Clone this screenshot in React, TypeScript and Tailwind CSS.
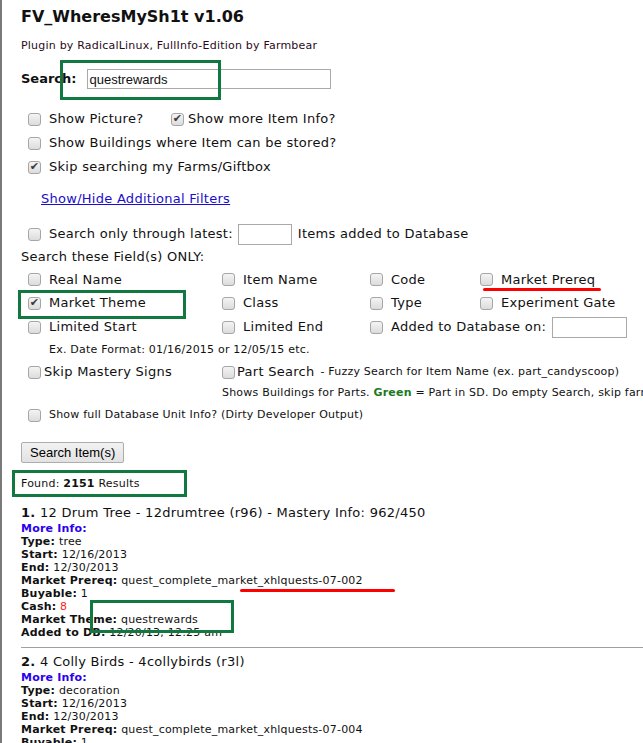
import React from "react"

function Box({ checked = false }: { checked?: boolean }) {
    return (
        <span className="relative inline-flex w-[13px] h-[13px] shrink-0 items-center justify-center rounded-[3px] border border-[#a6a6a6] bg-gradient-to-b from-[#f4f4f4] to-[#dcdcdc]">
            {checked && <span className="text-[11px] leading-none text-[#3c3c3c] -mt-[1px]">✔</span>}
        </span>
    )
}

function Field({ label, checked = false }: { label: string; checked?: boolean }) {
    return (
        <div className="flex items-center gap-[8px]">
            <Box checked={checked} />
            <span>{label}</span>
        </div>
    )
}

function Line({ k, v, vClass = "" }: { k: string; v: string; vClass?: string }) {
    return (
        <div>
            <b>{k}:</b> <span className={vClass}>{v}</span>
        </div>
    )
}

export default function App() {
    const font = { fontFamily: '"DejaVu Sans", Verdana, sans-serif' }
    const arial = { fontFamily: '"Liberation Sans", Arial, sans-serif' }

    return (
        <div className="relative min-h-screen overflow-hidden border-l-2 border-[#7a7a7a] bg-white pl-[19px] text-[#111] tracking-[0.27px]" style={font}>
            {/* header */}
            <div className="h-[34px] flex items-center text-[16px] font-bold tracking-normal">FV_WheresMySh1t v1.06</div>
            <div className="h-[24px] flex items-center text-[11px] tracking-[0.21px] text-[#2a0a1a]">Plugin by RadicalLinux, FullInfo-Edition by Farmbear</div>

            {/* search */}
            <div className="h-[42px] flex items-center text-[13px]">
                <b className="mr-[10px] tracking-normal">Search:</b>
                <div className="w-[244px] h-[20px] border border-[#a9a9a9] flex items-center px-[2px] text-[13px] leading-none tracking-normal" style={arial}>questrewards</div>
            </div>

            {/* options */}
            <div className="mt-[7px] pl-[7px] text-[13px]">
                <div className="h-[24px] flex items-center">
                    <div className="w-[143px]"><Field label="Show Picture?" /></div>
                    <div className="flex items-center gap-[4px]"><Box checked /><span>Show more Item Info?</span></div>
                </div>
                <div className="h-[24px] flex items-center"><Field label="Show Buildings where Item can be stored?" /></div>
                <div className="h-[24px] flex items-center"><Field label="Skip searching my Farms/Giftbox" checked /></div>
            </div>

            <div className="h-[40px] flex items-center pl-[20px] text-[13px]">
                <a href="#" className="text-[#1a0dcc] underline">Show/Hide Additional Filters</a>
            </div>

            <div className="mt-[3px] h-[24px] pl-[7px] flex items-center text-[13px]">
                <Field label="Search only through latest:" />
                <div className="ml-[5px] mr-[6px] w-[54px] h-[21px] border border-[#a9a9a9]" />
                <span>Items added to Database</span>
            </div>

            <div className="h-[22px] flex items-center text-[13px]">Search these Field(s) ONLY:</div>

            {/* fields grid */}
            <div className="pl-[7px] text-[13px] grid grid-cols-[194px_148px_110px_auto]">
                <div className="h-[23px] flex items-center"><Field label="Real Name" /></div>
                <div className="h-[23px] flex items-center"><Field label="Item Name" /></div>
                <div className="h-[23px] flex items-center"><Field label="Code" /></div>
                <div className="h-[23px] flex items-center"><Field label="Market Prereq" /></div>

                <div className="h-[24px] flex items-center"><Field label="Market Theme" checked /></div>
                <div className="h-[24px] flex items-center"><Field label="Class" /></div>
                <div className="h-[24px] flex items-center"><Field label="Type" /></div>
                <div className="h-[24px] flex items-center"><Field label="Experiment Gate" /></div>

                <div className="h-[24px] flex items-center"><Field label="Limited Start" /></div>
                <div className="h-[24px] flex items-center"><Field label="Limited End" /></div>
                <div className="h-[24px] flex items-center col-span-2 whitespace-nowrap">
                    <Field label="Added to Database on:" />
                    <div className="ml-[6px] w-[75px] h-[21px] border border-[#a9a9a9]" />
                </div>
            </div>

            <div className="h-[22px] flex items-center pl-[28px] text-[11px] tracking-[0.21px]">Ex. Date Format: 01/16/2015 or 12/05/15 etc.</div>

            <div className="h-[22px] pl-[7px] flex items-center text-[13px] whitespace-nowrap">
                <div className="w-[194px] flex items-center gap-[3px]"><Box /><span>Skip Mastery Signs</span></div>
                <div className="flex items-center gap-[2px]">
                    <Box />
                    <span>Part Search</span>
                    <span className="text-[11px] tracking-[0.21px] ml-[4px]">- Fuzzy Search for Item Name (ex. part_candyscoop)</span>
                </div>
            </div>
            <div className="h-[20px] pl-[201px] flex items-center text-[11px] tracking-[0.21px] whitespace-nowrap">
                Shows Buildings for Parts.&nbsp;<b className="text-[#1c7a1c]">Green</b>&nbsp;= Part in SD. Do empty Search, skip farms and Giftbox
            </div>
            <div className="h-[24px] pl-[7px] flex items-center gap-[8px] text-[11px] tracking-[0.21px]">
                <Box />
                <span>Show full Database Unit Info? (Dirty Developer Output)</span>
            </div>

            <button className="mt-[15px] h-[21px] px-[8px] rounded-[2px] border border-[#adadad] bg-gradient-to-b from-[#f2f2f2] to-[#e2e2e2] text-[13px] leading-none tracking-normal text-black" style={arial}>
                Search Item(s)
            </button>

            <div className="mt-[8px] h-[24px] flex items-center text-[11px] tracking-[0.21px]">Found:&nbsp;<b>2151</b>&nbsp;Results</div>

            {/* result 1 */}
            <div className="mt-[7px] h-[19px] flex items-center text-[13px] whitespace-nowrap"><b>1.</b>&nbsp;12 Drum Tree - 12drumtree (r96) - Mastery Info: 962/450</div>
            <div className="text-[11px] leading-[13px] tracking-[0.21px]">
                <div className="font-bold text-[#2a00ee]">More Info:</div>
                <Line k="Type" v="tree" />
                <Line k="Start" v="12/16/2013" />
                <Line k="End" v="12/30/2013" />
                <Line k="Market Prereq" v="quest_complete_market_xhlquests-07-002" />
                <Line k="Buyable" v="1" />
                <Line k="Cash" v="8" vClass="text-[#ff2020]" />
                <Line k="Market Theme" v="questrewards" />
                <Line k="Added to DB" v="12/20/13, 12:25 am" />
            </div>

            <hr className="mt-[8px] border-0 border-t border-[#a0a0a0] w-[700px]" />

            {/* result 2 */}
            <div className="mt-[5px] h-[18px] flex items-center text-[13px] whitespace-nowrap"><b>2.</b>&nbsp;4 Colly Birds - 4collybirds (r3l)</div>
            <div className="text-[11px] leading-[13px] tracking-[0.21px]">
                <div className="font-bold text-[#2a00ee]">More Info:</div>
                <Line k="Type" v="decoration" />
                <Line k="Start" v="12/16/2013" />
                <Line k="End" v="12/30/2013" />
                <Line k="Market Prereq" v="quest_complete_market_xhlquests-07-004" />
                <Line k="Buyable" v="1" />
                <Line k="Cash" v="6" vClass="text-[#ff2020]" />
                <Line k="Market Theme" v="questrewards" />
                <Line k="Added to DB" v="12/20/13, 12:25 am" />
            </div>

            {/* annotations drawn over the screenshot */}
            <div className="absolute left-[58px] top-[60px] w-[161px] h-[40px] border-[3px] border-[#11793f]" />
            <div className="absolute left-[16px] top-[290px] w-[168px] h-[29px] border-[3px] border-[#11793f]" />
            <div className="absolute left-[481px] top-[288px] w-[118px] h-[3px] rounded-full bg-[#ff0000]" />
            <div className="absolute left-[10px] top-[470px] w-[175px] h-[27px] border-[3px] border-[#11793f]" />
            <div className="absolute left-[238px] top-[589px] w-[155px] h-[3px] rounded-full bg-[#ff0000]" />
            <div className="absolute left-[88px] top-[600px] w-[144px] h-[33px] border-[3px] border-[#11793f]" />
        </div>
    )
}
